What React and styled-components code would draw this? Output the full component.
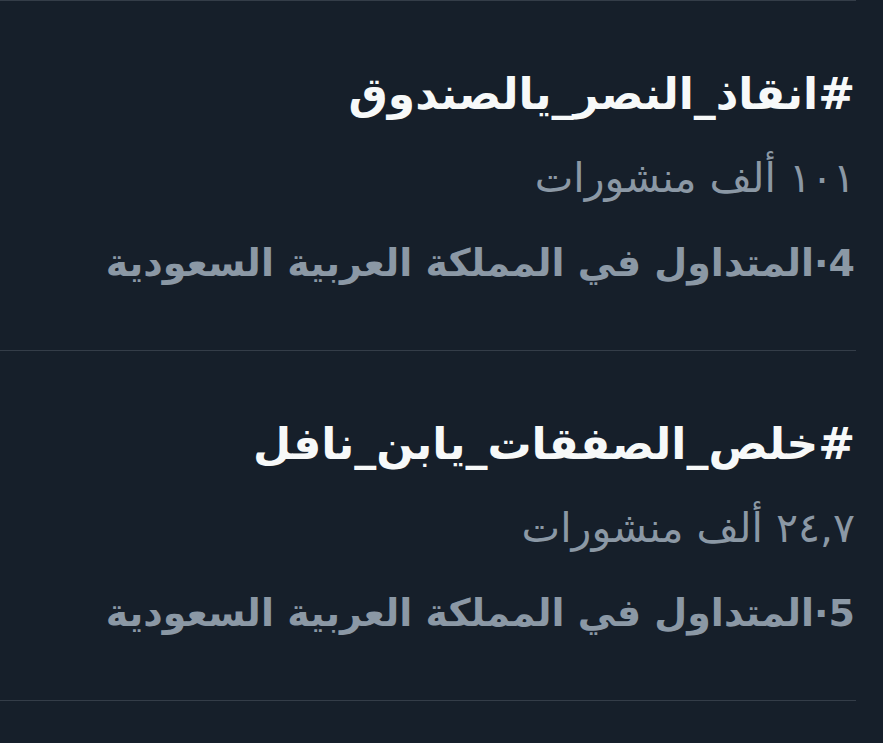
import React from 'react';
import styled, { createGlobalStyle } from 'styled-components';

const GlobalStyle = createGlobalStyle`
  html, body {
    margin: 0;
    padding: 0;
    background: #161f2a;
  }
  body {
    font-family: "DejaVu Sans", "Noto Sans", sans-serif;
  }
`;

const trends = [
  { tag: '#انقاذ_النصر_يالصندوق', posts: '١٠١ ألف منشورات', rank: 4 },
  { tag: '#خلص_الصفقات_يابن_نافل', posts: '٢٤,٧ ألف منشورات', rank: 5 },
];

const Page = styled.div`
  width: 883px;
  height: 743px;
  overflow: hidden;
  background: #161f2a;
`;

const List = styled.div`
  width: 856px;
  border-top: 1px solid #343d48;
`;

const Trend = styled.div`
  direction: rtl;
  height: 350px;
  padding: 50px 1px 0 0;
  box-sizing: border-box;
  border-bottom: 1px solid #343d48;
`;

const Tag = styled.div`
  font-size: 44px;
  font-weight: 700;
  line-height: 85px;
  color: #f7f9f9;
`;

const Posts = styled.div`
  font-size: 41px;
  line-height: 85px;
  color: #8b98a5;
`;

const Place = styled.div`
  font-size: 38px;
  font-weight: 700;
  line-height: 85px;
  color: #8b98a5;
`;

export default function App() {
  return (
    <Page>
      <GlobalStyle />
      <List>
        {trends.map((t) => (
          <Trend key={t.rank}>
            <Tag>{t.tag}</Tag>
            <Posts>{t.posts}</Posts>
            <Place>{t.rank}·المتداول في المملكة العربية السعودية</Place>
          </Trend>
        ))}
      </List>
    </Page>
  );
}
